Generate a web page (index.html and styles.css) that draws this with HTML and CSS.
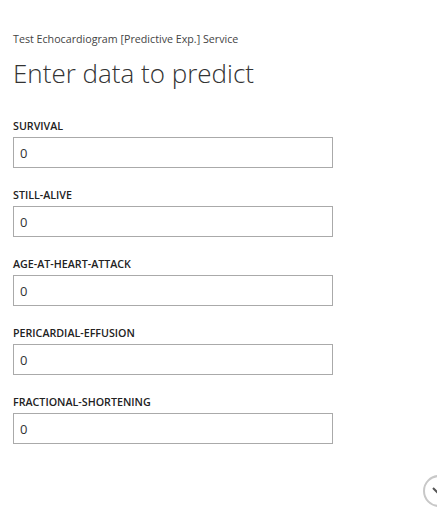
FILE: index.html
```html
<!DOCTYPE html>
<html>
<head>
<meta charset="utf-8">
<link rel="stylesheet" href="styles.css">
</head>
<body>
<div class="page">
  <div class="service">Test Echocardiogram [Predictive Exp.] Service</div>
  <h1 class="title">Enter data to predict</h1>
  <form class="form">
    <div class="field">
      <label class="label">SURVIVAL</label>
      <input class="input" type="text" value="0">
    </div>
    <div class="field">
      <label class="label">STILL-ALIVE</label>
      <input class="input" type="text" value="0">
    </div>
    <div class="field">
      <label class="label">AGE-AT-HEART-ATTACK</label>
      <input class="input" type="text" value="0">
    </div>
    <div class="field">
      <label class="label">PERICARDIAL-EFFUSION</label>
      <input class="input" type="text" value="0">
    </div>
    <div class="field">
      <label class="label">FRACTIONAL-SHORTENING</label>
      <input class="input" type="text" value="0">
    </div>
  </form>
</div>
<div class="scroll-btn">
  <svg width="32" height="32" viewBox="0 0 32 32">
    <circle cx="16" cy="16" r="15" fill="#fff" stroke="#c8c8c8" stroke-width="2"/>
    <path d="M10 13 L16 19 L22 13" fill="none" stroke="#555" stroke-width="2"/>
  </svg>
</div>
</body>
</html>
```

FILE: styles.css
```css
html, body {
  margin: 0;
  padding: 0;
  background: #fff;
  overflow: hidden;
}
body {
  font-family: "Open Sans", "Noto Sans", sans-serif;
  color: #333;
  width: 437px;
  height: 511px;
  position: relative;
}
.page {
  padding: 31px 0 0 13px;
}
.service {
  font-size: 10.7px;
  line-height: 16px;
  color: #444;
}
.title {
  margin: 8px 0 0 0;
  font-size: 26px;
  line-height: 36px;
  font-weight: 300;
  color: #333;
  letter-spacing: 0;
}
.form {
  margin-top: 27px;
  display: flex;
  flex-direction: column;
  gap: 19px;
}
.field {
  display: flex;
  flex-direction: column;
}
.label {
  font-size: 10.7px;
  line-height: 16px;
  font-weight: 600;
  color: #222;
  margin-bottom: 3px;
}
.input {
  box-sizing: border-box;
  width: 320px;
  height: 31px;
  border: 1px solid #aaa;
  padding: 0 6px;
  font-family: "Open Sans", "Noto Sans", sans-serif;
  font-size: 13px;
  color: #333;
  outline: none;
  margin: 0;
}
.scroll-btn {
  position: absolute;
  left: 423px;
  top: 475px;
  width: 32px;
  height: 32px;
}
```
